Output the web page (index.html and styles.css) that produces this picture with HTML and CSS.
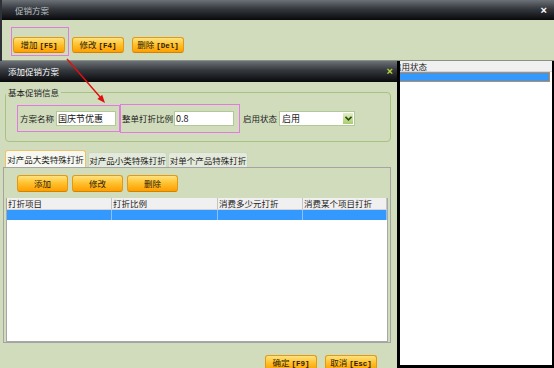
FILE: index.html
```html
<!DOCTYPE html>
<html lang="zh-CN">
  <head>
    <meta charset="UTF-8" />
    <meta name="viewport" content="width=device-width, initial-scale=1.0" />
    <title>促销方案</title>
    <link rel="stylesheet" href="styles.css">
  </head>
  <body>
    <div class="window">
      <div class="titlebar">
        <span class="title">促销方案</span>
        <span class="close">×</span>
      </div>
      <div class="toolbar">
        <div class="mark mark-btn">
          <button class="btn">增加 <b>[F5]</b></button>
        </div>
        <button class="btn btn-edit">修改 <b>[F4]</b></button>
        <button class="btn btn-del">删除 <b>[Del]</b></button>
      </div>
      <div class="plan-list">
        <div class="plan-head"><span>启用状态</span></div>
        <div class="plan-row"></div>
      </div>
    </div>

    <div class="dialog">
      <div class="titlebar dialog-title">
        <span class="title">添加促销方案</span>
        <span class="close">×</span>
      </div>
      <div class="dialog-body">
        <fieldset class="group">
          <legend>基本促销信息</legend>
          <div class="group-row">
            <label class="mark field field-name">
              方案名称
              <input class="text-input" type="text" value="国庆节优惠" />
            </label>
            <label class="mark field field-rate">
              整单打折比例
              <input class="text-input" type="text" value="0.8" />
            </label>
            <span class="status-label">启用状态</span>
            <div class="select">
              <span>启用</span>
              <span class="select-arrow">
                <svg width="7" height="5" viewBox="0 0 7 5">
                  <path d="M0.5 0.8 L3.5 3.8 L6.5 0.8" fill="none" stroke="#2f4a10" stroke-width="1.6" />
                </svg>
              </span>
            </div>
          </div>
        </fieldset>

        <div class="tabs">
          <div class="tab tab-1 active">对产品大类特殊打折</div>
          <div class="tab tab-2">对产品小类特殊打折</div>
          <div class="tab tab-3">对单个产品特殊打折</div>
        </div>
        <div class="tab-panel">
          <div class="panel-buttons">
            <button class="btn btn-small">添加</button>
            <button class="btn btn-small">修改</button>
            <button class="btn btn-small">删除</button>
          </div>
          <div class="grid">
            <div class="grid-head">
              <span>打折项目</span>
              <span>打折比例</span>
              <span>消费多少元打折</span>
              <span>消费某个项目打折</span>
            </div>
            <div class="grid-row">
              <span></span><span></span><span></span><span></span>
            </div>
          </div>
        </div>

        <div class="dialog-footer">
          <button class="btn">确定 <b>[F9]</b></button>
          <button class="btn">取消 <b>[Esc]</b></button>
        </div>
      </div>
    </div>

    <svg class="arrow" width="554" height="368" viewBox="0 0 554 368">
      <line x1="67" y1="59" x2="100.5" y2="97.5" stroke="#e01010" stroke-width="1.4" />
      <polygon points="105,103 97.4,98.9 102.2,94.8" fill="#e01010" />
    </svg>
  </body>
</html>
```

FILE: styles.css
```css
* {
  box-sizing: border-box;
}

body {
  margin: 0;
  width: 554px;
  height: 368px;
  overflow: hidden;
  position: relative;
  background: #d1dcbc;
  color: #1c1c1c;
  font-family: "Noto Sans CJK SC", "Liberation Sans", sans-serif;
  font-size: 8.5px;
  line-height: 11px;
}

/* outer window */
.window {
  height: 368px;
  display: flex;
  flex-direction: column;
  border-left: 2px solid #2e3135;
}

.titlebar {
  height: 20px;
  flex-shrink: 0;
  display: flex;
  align-items: center;
  justify-content: space-between;
  padding: 0 7px 0 13px;
  background: linear-gradient(#6c7177, #34383d 45%, #08090b);
  color: #bcc0c5;
}

.close {
  font-family: "Liberation Sans", sans-serif;
  font-size: 11px;
  font-weight: bold;
  line-height: 1;
  color: #fff;
}

.toolbar {
  height: 41px;
  flex-shrink: 0;
  display: flex;
  align-items: flex-start;
  padding: 7px 0 0 9px;
  border-bottom: 1px solid #8c9188;
}

.mark {
  border: 1px solid #e27ae2;
}

.mark-btn {
  padding: 9px 3px 2px 1px;
}

.btn-edit {
  margin: 10px 0 0 3px;
}

.btn-del {
  margin: 10px 0 0 8px;
}

.btn {
  width: 52px;
  height: 16px;
  padding: 0;
  border: 1px solid #e29a12;
  border-bottom-color: #cf8300;
  border-radius: 3px;
  background: linear-gradient(#ffe27e, #ffc332 45%, #ff9e00);
  color: #2e1c00;
  font-family: inherit;
  font-size: 8.5px;
  line-height: 13px;
  white-space: nowrap;
  cursor: pointer;
}

.btn b {
  font-family: "Liberation Mono", monospace;
  font-size: 7.5px;
}

.plan-list {
  flex: 1;
  background: #fff;
  border-right: 2px solid #000;
  border-bottom: 3px solid #000;
}

.plan-head {
  height: 11px;
  padding-left: 391px;
  background: #f0f0f0;
  border-bottom: 1px solid #d6d6d6;
  color: #222;
}

.plan-row {
  height: 10px;
  margin-right: 2px;
  background: #3399ff;
  border: 1px solid #c8884a;
}

/* dialog */
.dialog {
  position: absolute;
  left: 0;
  top: 61px;
  width: 400px;
  height: 307px;
  border-right: 3px solid #000;
  background: #d1dcbc;
}

.dialog-title {
  height: 21px;
  padding: 0 4px 0 8px;
  color: #fff;
}

.dialog-title .close {
  color: #bcd83a;
}

.dialog-body {
  padding: 0 6px 0 3px;
}

.group {
  margin: 5px 0 0 2px;
  padding: 6px 0 8px 0;
  min-width: 0;
  border: 1px solid #a9c182;
  border-radius: 4px;
}

.group legend {
  padding: 0 2px;
  line-height: 11px;
}

.group-row {
  height: 29px;
  display: flex;
  align-items: center;
  padding-left: 11px;
}

.field {
  display: flex;
  align-items: center;
}

.field-name {
  height: 27px;
  padding: 0 3px 0 2px;
}

.field-name .text-input {
  margin-left: 2px;
}

.field-rate {
  height: 29px;
  padding: 0 5px 0 1px;
}

.field-rate .text-input {
  margin-left: 1px;
}

.text-input {
  width: 60px;
  height: 15px;
  padding: 0 1px;
  border: 1px solid #b3c897;
  background: #fff;
  color: #111;
  font-family: inherit;
  font-size: 9px;
  line-height: 13px;
}

.status-label {
  margin-left: 3px;
}

.select {
  width: 76px;
  height: 15px;
  margin-left: 2px;
  display: flex;
  align-items: center;
  justify-content: space-between;
  padding-left: 2px;
  border: 1px solid #b3c897;
  background: #fff;
  font-size: 9px;
}

.select-arrow {
  width: 10px;
  height: 11px;
  margin-right: 1px;
  display: flex;
  align-items: center;
  justify-content: center;
  background: linear-gradient(#e2f0c2, #a9cc6e);
}

.tabs {
  height: 17px;
  margin: 8px 0 0 2px;
  display: flex;
  align-items: flex-end;
}

.tab {
  height: 15px;
  line-height: 14px;
  text-align: center;
  white-space: nowrap;
  background: #e4eadb;
  border: 1px solid #cdd7bb;
  border-bottom: none;
  border-radius: 3px 3px 0 0;
}

.tab.active {
  height: 17px;
  line-height: 16px;
  background: #f6f8f1;
  border-color: #f1c169;
}

.tab-1 {
  width: 81px;
  margin-right: 2px;
}

.tab-2 {
  width: 79px;
  margin-right: 1px;
}

.tab-3 {
  width: 80px;
}

.tab-panel {
  height: 176px;
  padding: 7px 2px 0 2px;
  border: 1px solid #a4a4a4;
}

.panel-buttons {
  display: flex;
  gap: 4px;
  margin-left: 11px;
}

.btn-small {
  width: 51px;
  height: 17px;
  line-height: 15px;
}

.grid {
  height: 144px;
  margin-top: 6px;
  background: #fff;
  border: 1px solid #a8a8a8;
  border-top: none;
}

.grid-head,
.grid-row {
  display: grid;
  grid-template-columns: 105px 106px 85px 1fr;
}

.grid-head {
  height: 12px;
  background: #f0f0f0;
  border-bottom: 1px solid #d2d2d2;
}

.grid-head span {
  padding-left: 1px;
  border-right: 1px solid #c4c4c4;
  white-space: nowrap;
  color: #222;
}

.grid-row {
  height: 10px;
  background: #3399ff;
}

.grid-row span {
  border-right: 1px solid #8cc2f6;
}

.dialog-footer {
  display: flex;
  justify-content: flex-end;
  gap: 8px;
  margin-top: 12px;
  padding-right: 14px;
}

.arrow {
  position: absolute;
  left: 0;
  top: 0;
  pointer-events: none;
}
```
